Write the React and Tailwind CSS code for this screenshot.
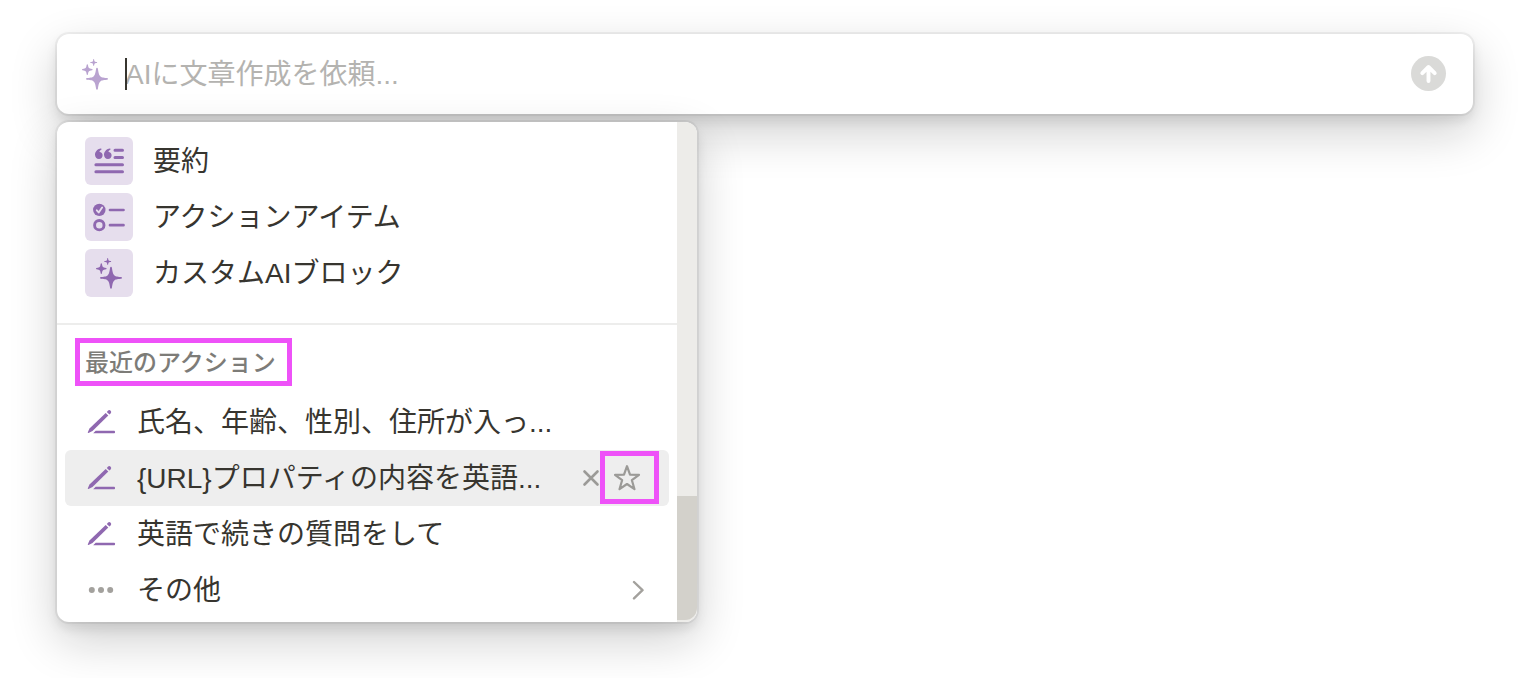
const FONT = "font-['Liberation_Sans','Noto_Sans_CJK_JP',sans-serif]";

function SparkleIcon({ className }) {
  return (
    <svg viewBox="0 0 32 32" className={className} fill="currentColor" aria-hidden="true">
      <path d="M18 9.800c.5 0 .8.400.9 1 .8 5.200 1.200 6.200 2.400 7.400 1.200 1.200 2 1.300 6.700 1.800.6.100 1 .4 1 .9s-.4.800-1 .9c-4.700.5-5.500.6-6.700 1.800-1.200 1.200-1.600 2.200-2.400 7.200-.1.600-.4 1-.9 1s-.8-.4-.9-1c-.8-5-1.200-6-2.400-7.200-1.200-1.200-2-1.300-6.700-1.800-.6-.1-1-.4-1-.9s.4-.8 1-.9c4.700-.5 5.500-.6 6.700-1.800 1.200-1.200 1.600-2.200 2.400-7.400.1-.6.4-1 .9-1z" />
      <path d="M8.300 6.300c.3 0 .5.200.6.500.4 2.200.5 2.600 1.100 3.200.6.600 1.100.7 3.100 1 .3.100.5.300.5.600s-.2.500-.5.600c-2 .3-2.500.4-3.100 1-.6.600-.7 1-1.100 3.200-.1.300-.3.500-.6.500s-.5-.2-.6-.5c-.4-2.200-.5-2.600-1.100-3.200-.6-.6-1.100-.7-3.100-1-.3-.1-.5-.3-.5-.6s.2-.5.5-.6c2-.3 2.500-.4 3.100-1 .6-.6.700-1 1.100-3.200.1-.3.300-.5.600-.5z" />
      <path d="M14.700 1c.2 0 .4.100.4.400.3 1.500.3 1.700.7 2.100.4.400.6.400 2 .6.200.1.400.2.400.4s-.2.300-.4.400c-1.400.2-1.600.2-2 .6-.4.400-.4.600-.7 2.100 0 .3-.2.400-.4.400s-.4-.1-.4-.4c-.3-1.500-.3-1.700-.7-2.100-.4-.4-.6-.4-2-.6-.2-.1-.4-.2-.4-.4s.2-.3.400-.4c1.400-.2 1.600-.2 2-.6.4-.4.400-.6.700-2.100 0-.3.200-.4.400-.4z" />
    </svg>
  );
}

function SummaryIcon() {
  return (
    <svg viewBox="0 0 32 32" className="size-8" aria-hidden="true">
      <g fill="currentColor">
        <path d="M4 5.200C5.100 4 6.700 3.300 7.900 3.400c.9.100.9 1 .2 1.400-1 .6-1.600 1.300-1.700 2.100 2 0 3.200 1.500 3.200 3.400 0 2.100-1.500 3.800-3.600 3.800-2.500 0-4-2-4-4.600 0-1.700.8-3.100 2-4.300z" />
        <path d="M13 5.200c1.100-1.200 2.700-1.900 3.900-1.800.9.100.9 1 .2 1.400-1 .6-1.600 1.300-1.700 2.100 2 0 3.200 1.500 3.200 3.400 0 2.100-1.500 3.800-3.600 3.800-2.500 0-4-2-4-4.600 0-1.700.8-3.100 2-4.300z" />
      </g>
      <g stroke="currentColor" strokeWidth="3" strokeLinecap="round">
        <path d="M22 5.300h7.500M22 12.500h7.500M2.900 19.700h26.600M2.900 26.800h26.600" />
      </g>
    </svg>
  );
}

function ActionItemsIcon() {
  return (
    <svg viewBox="0 0 32 32" className="size-8" fill="none" aria-hidden="true">
      <circle cx="6.300" cy="8.900" r="6.200" fill="currentColor" />
      <path d="M3.800 9.300l1.900 2.200 3.400-5" stroke="#e6deed" strokeWidth="1.900" strokeLinecap="round" strokeLinejoin="round" />
      <circle cx="6.300" cy="24.200" r="4.700" stroke="currentColor" strokeWidth="2.900" />
      <path d="M17 9h13.500M17 24.200h13.500" stroke="currentColor" strokeWidth="2.700" strokeLinecap="round" />
    </svg>
  );
}

function PencilIcon() {
  return (
    <svg viewBox="0 0 32 32" className="size-8 shrink-0 text-[#8f68b0]" fill="currentColor" aria-hidden="true">
      <path d="M20.700 6.900L23.300 9.500 7.500 25 3.500 27c-.5.200-.9-.2-.7-.7L4.500 22.500z" />
      <path d="M21.800 5.900l1.100-1.200a1.900 1.900 0 0 1 2.700 2.700L24.400 8.500z" />
      <path d="M10.700 24.700H29.200c.5 0 .8.300.8.700v1c0 .5-.3.800-.8.800H8.200z" />
    </svg>
  );
}

function DotsIcon() {
  return (
    <svg viewBox="0 0 32 32" className="size-8 shrink-0 text-[#a3a19d]" fill="currentColor" aria-hidden="true">
      <circle cx="6.800" cy="16" r="3" />
      <circle cx="16" cy="16" r="3" />
      <circle cx="25.200" cy="16" r="3" />
    </svg>
  );
}

function BlockItem({ icon, label }) {
  return (
    <li>
      <button type="button" className="flex h-14 w-full items-center gap-5 px-5 text-left">
        <span className="flex size-12 shrink-0 items-center justify-center rounded-md bg-[#e6deed] text-[#8f68b0]">
          {icon}
        </span>
        <span className="pt-0.5">{label}</span>
      </button>
    </li>
  );
}

function RecentItem({ icon, label, active = false, children }) {
  return (
    <li className={active ? "flex h-14 items-center rounded-md bg-[#eeeeee] pr-4" : "flex h-14 items-center pr-4"}>
      <button type="button" className="flex h-full min-w-0 flex-1 items-center gap-5 pl-5 text-left">
        {icon}
        <span className="truncate pt-0.5">{label}</span>
      </button>
      {children}
    </li>
  );
}

const PANEL_SHADOW =
  "shadow-[0_0_0_2px_rgba(15,15,15,0.05),0_6px_12px_rgba(15,15,15,0.1),0_18px_48px_rgba(15,15,15,0.2)]";

export default function App() {
  return (
    <main className={`min-h-screen overflow-hidden bg-white pt-[34px] pr-[45px] pb-14 pl-[57px] text-[28px] leading-10 text-[#37352f] ${FONT}`}>
      <form
        className={`flex h-20 items-center rounded-xl bg-white pr-[26px] pl-[22px] ${PANEL_SHADOW}`}
        onSubmit={(e) => e.preventDefault()}
      >
        <SparkleIcon className="size-8 shrink-0 text-[#b9a3d0]" />
        <div className="relative ml-[14px] flex-1">
          <input
            type="text"
            aria-label="AIに文章作成を依頼"
            placeholder="AIに文章作成を依頼..."
            className="block h-10 w-full bg-transparent pt-0.5 caret-transparent outline-none placeholder:text-[#b4b3b0]"
          />
          <span className="absolute top-1 left-0 h-8 w-0.5 bg-[#37352f]" aria-hidden="true" />
        </div>
        <button type="submit" aria-label="送信" className="shrink-0">
          <svg viewBox="0 0 36 36" className="size-9" aria-hidden="true">
            <circle cx="17.500" cy="17.500" r="17.500" fill="#dadad8" />
            <path d="M17.500 25V11.500M11.300 17.200L17.500 11l6.200 6.200" fill="none" stroke="#fff" strokeWidth="3.900" strokeLinecap="round" strokeLinejoin="round" />
          </svg>
        </button>
      </form>

      <div className={`relative mt-2 flex w-full max-w-[640px] overflow-hidden rounded-xl bg-white ${PANEL_SHADOW}`}>
        <div className="min-w-0 flex-1 pt-[11px] pb-1">
          <ul className="px-2 pb-[22px]">
            <BlockItem icon={<SummaryIcon />} label="要約" />
            <BlockItem icon={<ActionItemsIcon />} label="アクションアイテム" />
            <BlockItem icon={<SparkleIcon className="size-8" />} label="カスタムAIブロック" />
          </ul>
          <section className="border-t-2 border-[#ededec] pt-[13px]">
            <h2 className="ml-[18px] flex h-12 w-[217px] items-center border-[5px] border-[#ee52f8] pt-0.5 pl-[5px] text-2xl leading-9 font-medium whitespace-nowrap text-[#7d7c78]">
              最近のアクション
            </h2>
            <ul className="mt-2 px-2">
              <RecentItem icon={<PencilIcon />} label="氏名、年齢、性別、住所が入っ..." />
              <RecentItem icon={<PencilIcon />} label="{URL}プロパティの内容を英語..." active>
                <div className="relative flex h-full w-[79px] shrink-0 items-center">
                  <button type="button" aria-label="削除" className="ml-2">
                    <svg viewBox="0 0 20 20" className="size-5" fill="none" stroke="#9b9a97" strokeWidth="2.600" strokeLinecap="round" aria-hidden="true">
                      <path d="M2.500 3.500l13 13M15.500 3.500l-13 13" />
                    </svg>
                  </button>
                  <button type="button" aria-label="お気に入りに追加" className="ml-3">
                    <svg viewBox="0 0 28 28" className="size-7" fill="none" stroke="#9b9a97" strokeWidth="2.200" strokeLinejoin="round" aria-hidden="true">
                      <path d="M13 2.200l3 8.400 9 .2-7.100 5.400 2.600 9L13 20l-7.500 5.200 2.600-9L1 10.800l9-.2z" />
                    </svg>
                  </button>
                  <span className="pointer-events-none absolute top-px -right-1.5 h-[53px] w-[59px] border-[5px] border-[#ee52f8]" aria-hidden="true" />
                </div>
              </RecentItem>
              <RecentItem icon={<PencilIcon />} label="英語で続きの質問をして" />
              <RecentItem icon={<DotsIcon />} label="その他">
                <svg viewBox="0 0 20 20" className="mr-1 size-5 shrink-0" fill="none" stroke="#a3a19d" strokeWidth="2.400" strokeLinecap="round" strokeLinejoin="round" aria-hidden="true">
                  <path d="M5 2l8.500 8.200L5 18.400" />
                </svg>
              </RecentItem>
            </ul>
          </section>
        </div>
        <div className="flex w-5 shrink-0 flex-col justify-end bg-[#edece9] pb-0.5" aria-hidden="true">
          <div className="h-1/4 rounded-br-xl bg-[#d3d1cb]" />
        </div>
      </div>
    </main>
  );
}
